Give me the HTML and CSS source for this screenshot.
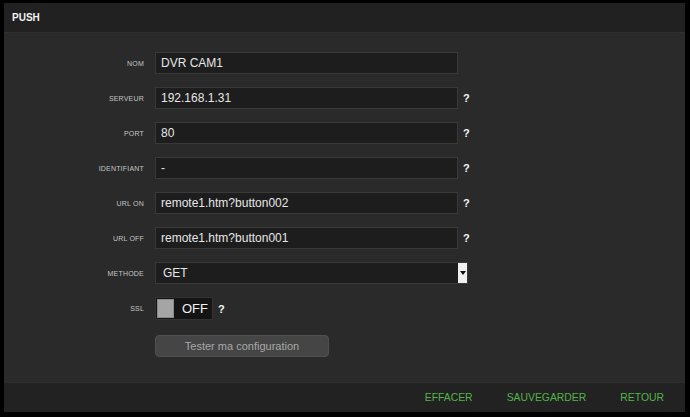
FILE: index.html
```html
<!DOCTYPE html>
<html lang="fr">
<head>
<meta charset="utf-8">
<title>Push</title>
<link rel="stylesheet" href="styles.css">
</head>
<body>
<div class="panel">
  <div class="panel-head">PUSH</div>
  <form class="panel-body">
    <div class="row">
      <label class="lbl">NOM</label>
      <div class="field"><span class="input">DVR CAM1</span></div>
    </div>
    <div class="row">
      <label class="lbl">SERVEUR</label>
      <div class="field"><span class="input">192.168.1.31</span><span class="help">?</span></div>
    </div>
    <div class="row">
      <label class="lbl">PORT</label>
      <div class="field"><span class="input">80</span><span class="help">?</span></div>
    </div>
    <div class="row">
      <label class="lbl">IDENTIFIANT</label>
      <div class="field"><span class="input">-</span><span class="help">?</span></div>
    </div>
    <div class="row">
      <label class="lbl">URL ON</label>
      <div class="field"><span class="input">remote1.htm?button002</span><span class="help">?</span></div>
    </div>
    <div class="row">
      <label class="lbl">URL OFF</label>
      <div class="field"><span class="input">remote1.htm?button001</span><span class="help">?</span></div>
    </div>
    <div class="row">
      <label class="lbl">METHODE</label>
      <div class="field">
        <span class="select">
          <span class="select-val">GET</span>
          <span class="select-btn"><svg width="6" height="4" viewBox="0 0 6 4"><path d="M0 0H6L3 4Z" fill="#111"/></svg></span>
        </span>
      </div>
    </div>
    <div class="row">
      <label class="lbl">SSL</label>
      <div class="field">
        <span class="toggle"><span class="knob"></span><span class="toggle-txt">OFF</span></span>
        <span class="help">?</span>
      </div>
    </div>
    <div class="row">
      <span class="lbl"></span>
      <div class="field"><span class="btn">Tester ma configuration</span></div>
    </div>
  </form>
  <div class="panel-foot">
    <a class="action">EFFACER</a>
    <a class="action">SAUVEGARDER</a>
    <a class="action">RETOUR</a>
  </div>
</div>
</body>
</html>
```
FILE: styles.css
```css
html, body {
  margin: 0;
  padding: 0;
  background: #000;
  font-family: "Liberation Sans", Arial, sans-serif;
}

.panel {
  margin: 3px 0 0 4px;
  width: 681px;
  height: 409px;
  display: flex;
  flex-direction: column;
  background: #2a2a2a;
}

.panel-head {
  height: 30px;
  flex: none;
  background: #212121;
  color: #f2f2f2;
  font-size: 10px;
  font-weight: bold;
  display: flex;
  align-items: center;
  padding-left: 8px;
  border-bottom: 1px solid #2f2f2f;
  box-sizing: border-box;
}

.panel-body {
  flex: 1;
  margin: 0;
  padding-top: 19px;
  display: flex;
  flex-direction: column;
  gap: 13px;
}

.row {
  display: grid;
  grid-template-columns: 140px 1fr;
  column-gap: 11px;
  align-items: center;
  min-height: 22px;
}

.lbl {
  text-align: right;
  color: #c4c4c4;
  font-size: 7px;
  letter-spacing: 0.2px;
}

.field {
  display: flex;
  align-items: center;
}

.input {
  box-sizing: border-box;
  width: 303px;
  height: 22px;
  background: #1d1d1d;
  border: 1px solid #393939;
  color: #e6e6e6;
  font-size: 12px;
  padding-left: 5px;
  display: flex;
  align-items: center;
}

.help {
  color: #f4f4f4;
  font-size: 11px;
  font-weight: bold;
  margin-left: 5px;
}

.select {
  box-sizing: border-box;
  width: 313px;
  height: 22px;
  background: #1d1d1d;
  border: 1px solid #393939;
  display: flex;
}

.select-val {
  flex: 1;
  color: #e6e6e6;
  font-size: 12px;
  padding-left: 7px;
  display: flex;
  align-items: center;
}

.select-btn {
  width: 9px;
  background: #f0f0f0;
  display: flex;
  align-items: center;
  justify-content: center;
}

.toggle {
  box-sizing: border-box;
  width: 58px;
  height: 23px;
  background: #141414;
  border: 1px solid #333;
  display: flex;
  align-items: center;
  padding-left: 1px;
}

.knob {
  width: 15px;
  height: 17px;
  background: #a5a5a5;
  border: 1px solid #8a8a8a;
}

.toggle-txt {
  color: #f0f0f0;
  font-size: 13px;
  margin-left: 8px;
}

.btn {
  box-sizing: border-box;
  width: 174px;
  height: 22px;
  margin-top: 2px;
  background: #454545;
  border: 1px solid #505050;
  border-radius: 4px;
  color: #a8a8a8;
  font-size: 11px;
  display: flex;
  align-items: center;
  justify-content: center;
}

.panel-foot {
  height: 30px;
  flex: none;
  background: #222;
  border-top: 1px solid #2e2e2e;
  box-sizing: border-box;
  display: flex;
  align-items: center;
  justify-content: flex-end;
  gap: 34px;
  padding-right: 21px;
}

.action {
  color: #54b348;
  font-size: 10.4px;
  cursor: pointer;
}
```
